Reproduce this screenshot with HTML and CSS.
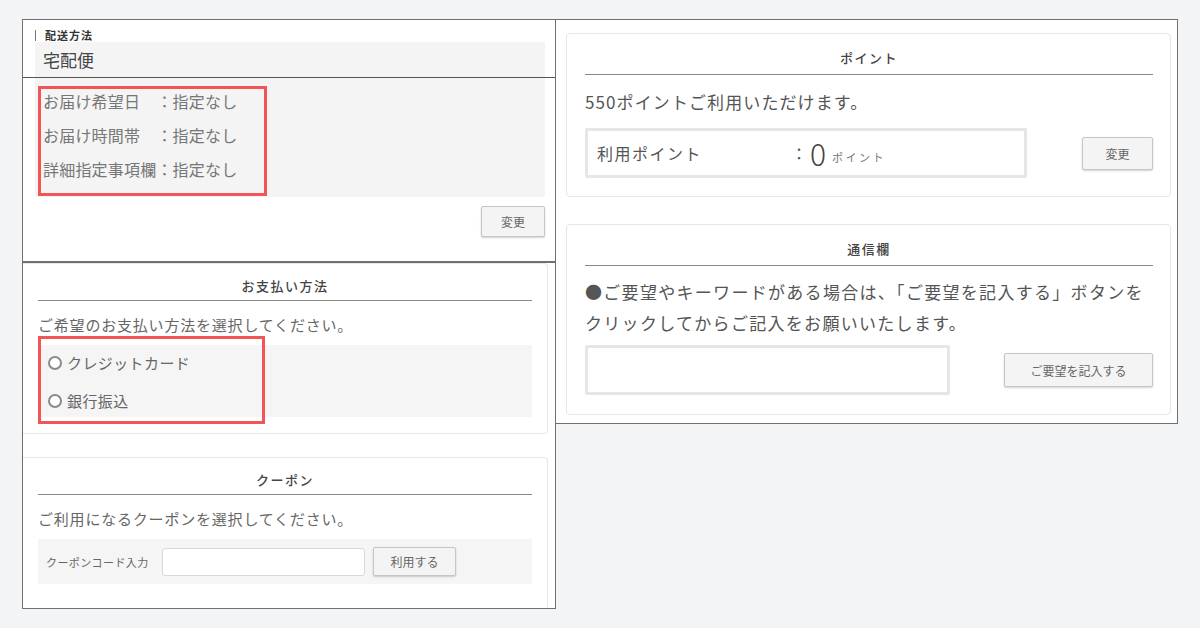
FILE: index.html
```html
<!DOCTYPE html>
<html lang="ja">
<head>
    <meta charset="UTF-8">
    <meta name="viewport" content="width=device-width, initial-scale=1.0">
    <title>ご注文手続き</title>
    <link rel="stylesheet" href="styles.css">
</head>
<body>
    <div class="sheet">
        <!-- 左側 -->
        <div class="col-left">
            <div class="panel ship">
                <div class="ship-label">配送方法</div>
                <div class="ship-name">宅配便</div>
                <div class="ship-rule"></div>
                <div class="ship-body">
                    <div class="ship-rows">
                        <div>お届け希望日　：指定なし</div>
                        <div>お届け時間帯　：指定なし</div>
                        <div>詳細指定事項欄：指定なし</div>
                    </div>
                </div>
                <div class="ship-foot">
                    <button class="btn btn-change">変更</button>
                </div>
            </div>

            <div class="panel pay-coupon">
                <div class="card card-pay">
                    <h2>お支払い方法</h2>
                    <p class="lead">ご希望のお支払い方法を選択してください。</p>
                    <div class="pay-box">
                        <label class="radio"><span class="dot"></span>クレジットカード</label>
                        <label class="radio"><span class="dot"></span>銀行振込</label>
                        <div class="mark"></div>
                    </div>
                </div>

                <div class="card card-coupon">
                    <h2>クーポン</h2>
                    <p class="lead">ご利用になるクーポンを選択してください。</p>
                    <div class="coupon-box">
                        <span class="coupon-label">クーポンコード入力</span>
                        <input type="text" class="coupon-input">
                        <button class="btn btn-use">利用する</button>
                    </div>
                </div>
            </div>
        </div>

        <!-- 右側 -->
        <div class="panel col-right">
            <div class="card card-point">
                <h2>ポイント</h2>
                <p class="lead-lg">550ポイントご利用いただけます。</p>
                <div class="point-row">
                    <div class="point-box">
                        <span class="point-label">利用ポイント</span>
                        <span class="point-colon">：</span>
                        <span class="point-num">0</span>
                        <span class="point-unit">ポイント</span>
                    </div>
                    <button class="btn btn-point">変更</button>
                </div>
            </div>

            <div class="card card-msg">
                <h2>通信欄</h2>
                <p class="lead-lg msg-text">●ご要望やキーワードがある場合は、「ご要望を記入する」ボタンを<br>クリックしてからご記入をお願いいたします。</p>
                <div class="msg-row">
                    <div class="msg-box"></div>
                    <button class="btn btn-msg">ご要望を記入する</button>
                </div>
            </div>
        </div>
    </div>
</body>
</html>
```

FILE: styles.css
```css
body {
    margin: 0;
    background: #f3f4f6;
    font-family: "Noto Sans CJK JP", "Noto Sans", sans-serif;
    color: #666;
}
.sheet {
    display: flex;
    align-items: flex-start;
    padding: 19px 0 0 22px;
}
.panel {
    background: #fff;
    border: 1px solid #707070;
    box-sizing: border-box;
}
.col-left {
    width: 534px;
}
.col-right {
    width: 623px;
    height: 405px;
    margin-left: -1px;
    padding: 13px 6px 0 10px;
}

/* 配送方法 */
.ship {
    height: 243px;
    padding: 0;
}
.ship-label {
    margin: 10px 0 0 12px;
    padding-left: 9px;
    border-left: 1px solid #777;
    height: 11px;
    font-size: 11px;
    line-height: 11px;
    font-weight: bold;
    letter-spacing: 1px;
    color: #333;
}
.ship-name {
    margin: 1px 10px 0 12px;
    background: #f4f4f4;
    height: 35px;
    line-height: 35px;
    padding-left: 8px;
    font-size: 17px;
    color: #444;
}
.ship-rule {
    border-top: 1px solid #555;
}
.ship-body {
    margin: 0 10px 0 12px;
    background: #f4f4f4;
    height: 111px;
    padding-top: 8px;
}
.ship-rows {
    width: 221px;
    margin-left: 3px;
    border: 3px solid #f25555;
    padding: 0 0 12px 2px;
    display: flex;
    flex-direction: column;
    gap: 10px;
    font-size: 16px;
    line-height: 24px;
    letter-spacing: 0.2px;
    color: #777;
}
.ship-foot {
    display: flex;
    justify-content: flex-end;
    padding: 9px 10px 0 0;
}

/* ボタン */
.btn {
    font-family: inherit;
    font-size: 12px;
    color: #666;
    background: #f4f4f4;
    border: 1px solid #c6c6c6;
    border-radius: 2px;
    box-shadow: 0 1px 2px rgba(0, 0, 0, 0.18);
    padding: 0;
}
.btn-change {
    width: 64px;
    height: 31px;
}
.btn-point {
    width: 71px;
    height: 33px;
}
.btn-msg {
    width: 149px;
    height: 34px;
}
.btn-use {
    width: 83px;
    height: 29px;
}

/* カード */
.card {
    background: #fff;
    border: 1px solid #e6e6e6;
    border-radius: 4px;
    padding: 0 17px 0 18px;
}
.card h2 {
    margin: 0;
    padding: 14px 0 6px;
    border-bottom: 1px solid #888;
    text-align: center;
    font-size: 13px;
    line-height: 20px;
    letter-spacing: 1.5px;
    font-weight: 500;
    color: #444;
}
.lead {
    margin: 10px 0 0;
    font-size: 15px;
    line-height: 28px;
    letter-spacing: 0.8px;
    color: #666;
}
.lead-lg {
    margin: 13px 0 0;
    font-size: 17px;
    line-height: 28px;
    letter-spacing: 1.1px;
    color: #555;
}

/* 支払い・クーポン */
.pay-coupon {
    height: 347px;
    overflow: hidden;
    padding-right: 7px;
}
.pay-coupon .card {
    border-left: none;
    border-radius: 0 4px 4px 0;
    padding: 0 15px;
}
.pay-coupon .card h2 {
    padding: 12px 0 4px;
}
.card-pay {
    height: 171px;
    box-sizing: border-box;
}
.pay-box {
    position: relative;
    margin-top: 6px;
    background: #f5f5f5;
    height: 72px;
    box-sizing: border-box;
    padding: 6px 0 0 10px;
    display: flex;
    flex-direction: column;
    gap: 14px;
}
.radio {
    display: flex;
    align-items: center;
    gap: 5px;
    font-size: 15px;
    line-height: 24px;
    letter-spacing: 0.4px;
    color: #666;
}
.dot {
    width: 10px;
    height: 10px;
    border: 2px solid #8a8a8a;
    border-radius: 50%;
    background: #fff;
}
.mark {
    position: absolute;
    left: 0;
    top: -9px;
    width: 227px;
    height: 88px;
    box-sizing: border-box;
    border: 3px solid #f25555;
}
.card-coupon {
    margin-top: 23px;
    height: 200px;
}
.coupon-box {
    margin-top: 6px;
    background: #f5f5f5;
    height: 45px;
    display: flex;
    align-items: center;
    padding-left: 8px;
}
.coupon-label {
    font-size: 11px;
    letter-spacing: 0.4px;
    color: #666;
    width: 116px;
}
.coupon-input {
    width: 203px;
    height: 28px;
    box-sizing: border-box;
    border: 1px solid #d8d8d8;
    border-radius: 3px;
    margin: 0 8px 0 0;
}

/* ポイント */
.card-point {
    height: 164px;
    box-sizing: border-box;
}
.point-row {
    margin-top: 12px;
    display: flex;
    justify-content: space-between;
    align-items: center;
}
.point-box {
    width: 442px;
    height: 50px;
    box-sizing: border-box;
    border: 3px solid #e6e6e6;
    border-radius: 2px;
    display: flex;
    align-items: center;
    padding-left: 9px;
}
.point-label {
    width: 194px;
    font-size: 16px;
    letter-spacing: 1.5px;
    color: #555;
}
.point-colon {
    font-size: 16px;
    color: #555;
    width: 19px;
}
.point-num {
    font-size: 30px;
    font-weight: 300;
    color: #444;
    margin-right: 6px;
}
.point-unit {
    font-size: 11px;
    letter-spacing: 2.5px;
    color: #777;
    margin-top: 8px;
}

/* 通信欄 */
.card-msg {
    margin-top: 27px;
    height: 191px;
    box-sizing: border-box;
}
.msg-text {
    margin-top: 10px;
    line-height: 31px;
    letter-spacing: 1.3px;
}
.msg-row {
    margin-top: 7px;
    display: flex;
    justify-content: space-between;
    align-items: center;
}
.msg-box {
    width: 365px;
    height: 50px;
    box-sizing: border-box;
    border: 3px solid #e6e6e6;
    border-radius: 2px;
}
```
